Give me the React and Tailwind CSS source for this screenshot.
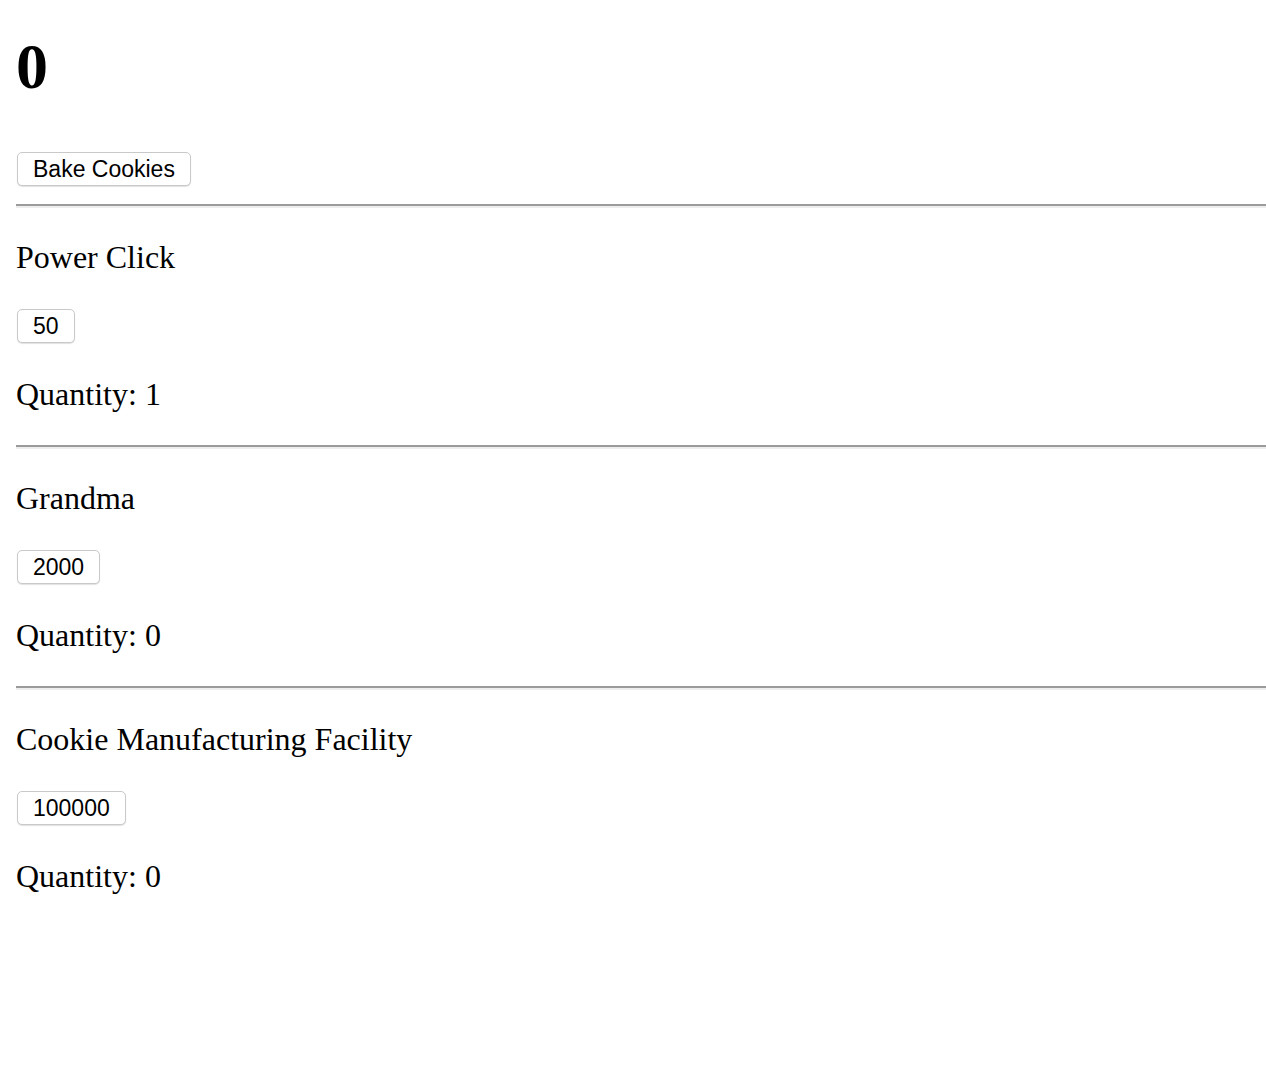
import React from 'react';

const items = [
    { title: 'Power Click', price: 50, quantity: 1 },
    { title: 'Grandma', price: 2000, quantity: 0 },
    { title: 'Cookie Manufacturing Facility', price: 100000, quantity: 0 },
];

function Btn({ children }) {
    return (
        <button className="ml-px h-[34px] px-[15px] bg-white border border-[#c9c9c9] rounded-[5px] shadow-[0_1px_1px_rgba(0,0,0,0.12)] text-[23px] leading-none text-black font-['Liberation_Sans',Arial,sans-serif]">
            {children}
        </button>
    );
}

export default function App() {
    return (
        <div className="pl-4 pt-[30px] pb-10 bg-white min-h-[1082px] text-black font-['Liberation_Serif','Times_New_Roman',serif]">
            <h1 className="text-[64px] font-bold leading-[74px]">0</h1>
            <div className="mt-[48px]">
                <Btn>Bake Cookies</Btn>
            </div>
            {items.map((item) => (
                <div key={item.title}>
                    <div className="mt-[18px] border-t-2 border-b-2 border-t-[#9b9b9b] border-b-[#eeeeee]" />
                    <p className="mt-[31px] text-[32px] leading-[37px]">{item.title}</p>
                    <div className="mt-[33px]">
                        <Btn>{item.price}</Btn>
                    </div>
                    <p className="mt-[33px] mb-[32px] text-[32px] leading-[37px]">Quantity: {item.quantity}</p>
                </div>
            ))}
        </div>
    );
}
